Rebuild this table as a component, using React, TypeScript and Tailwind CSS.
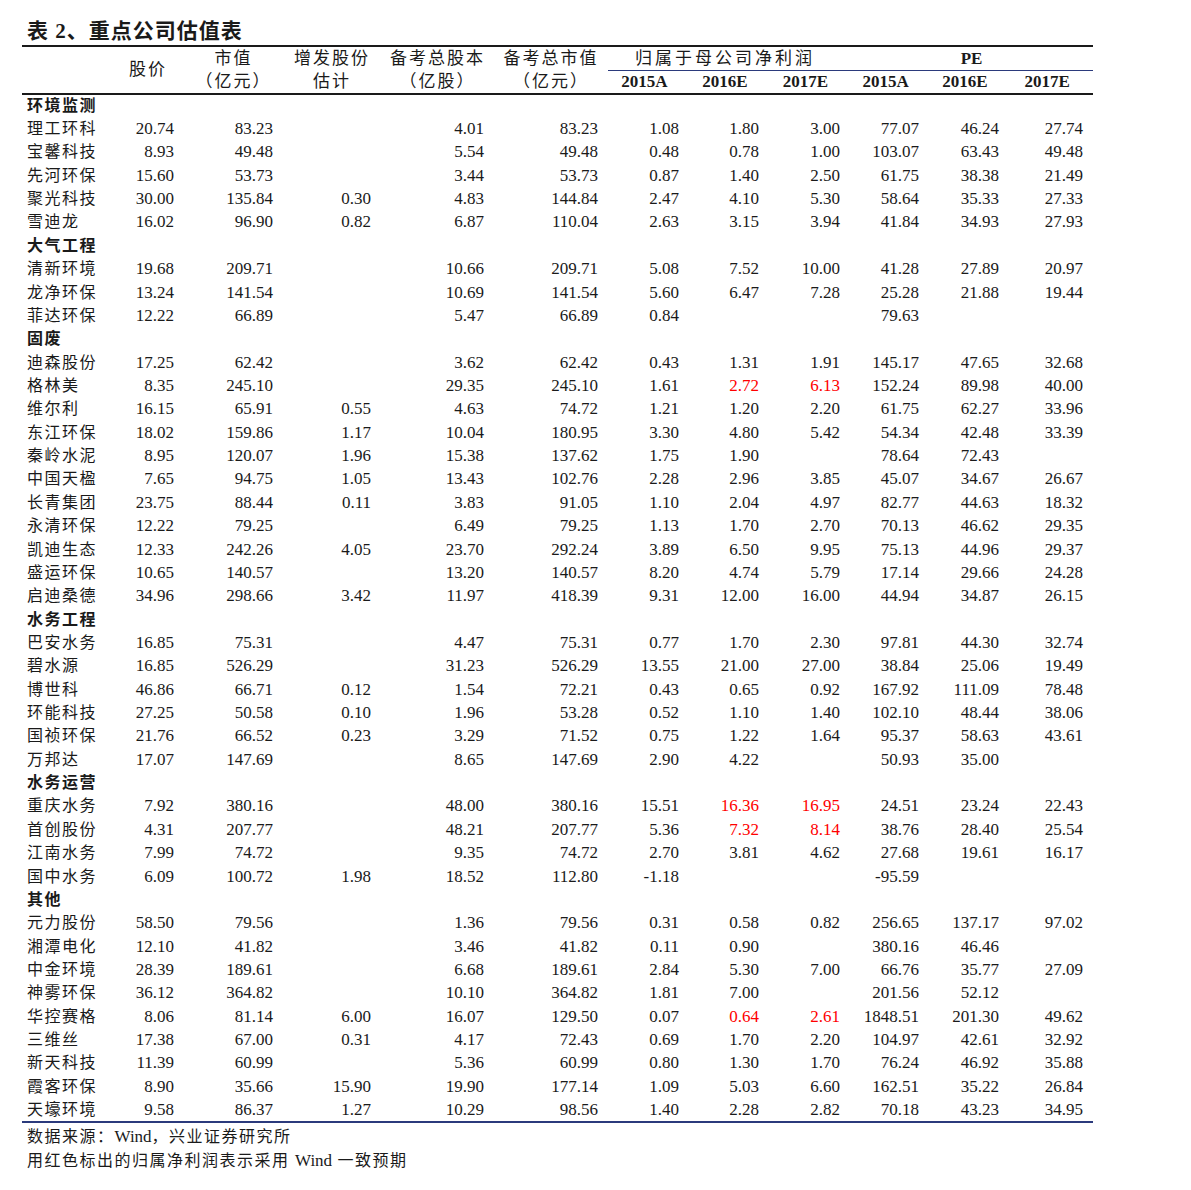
import React from "react";

// each row: name, then 11 values; "*" marks a figure printed in red (Wind consensus)
type Group = { title: string; rows: string[][] };

const groups: Group[] = [
 {
  title: "环境监测",
  rows: [
   ["理工环科", "20.74", "83.23", "", "4.01", "83.23", "1.08", "1.80", "3.00", "77.07", "46.24", "27.74"],
   ["宝馨科技", "8.93", "49.48", "", "5.54", "49.48", "0.48", "0.78", "1.00", "103.07", "63.43", "49.48"],
   ["先河环保", "15.60", "53.73", "", "3.44", "53.73", "0.87", "1.40", "2.50", "61.75", "38.38", "21.49"],
   ["聚光科技", "30.00", "135.84", "0.30", "4.83", "144.84", "2.47", "4.10", "5.30", "58.64", "35.33", "27.33"],
   ["雪迪龙", "16.02", "96.90", "0.82", "6.87", "110.04", "2.63", "3.15", "3.94", "41.84", "34.93", "27.93"],
  ],
 },
 {
  title: "大气工程",
  rows: [
   ["清新环境", "19.68", "209.71", "", "10.66", "209.71", "5.08", "7.52", "10.00", "41.28", "27.89", "20.97"],
   ["龙净环保", "13.24", "141.54", "", "10.69", "141.54", "5.60", "6.47", "7.28", "25.28", "21.88", "19.44"],
   ["菲达环保", "12.22", "66.89", "", "5.47", "66.89", "0.84", "", "", "79.63", "", ""],
  ],
 },
 {
  title: "固废",
  rows: [
   ["迪森股份", "17.25", "62.42", "", "3.62", "62.42", "0.43", "1.31", "1.91", "145.17", "47.65", "32.68"],
   ["格林美", "8.35", "245.10", "", "29.35", "245.10", "1.61", "*2.72", "*6.13", "152.24", "89.98", "40.00"],
   ["维尔利", "16.15", "65.91", "0.55", "4.63", "74.72", "1.21", "1.20", "2.20", "61.75", "62.27", "33.96"],
   ["东江环保", "18.02", "159.86", "1.17", "10.04", "180.95", "3.30", "4.80", "5.42", "54.34", "42.48", "33.39"],
   ["秦岭水泥", "8.95", "120.07", "1.96", "15.38", "137.62", "1.75", "1.90", "", "78.64", "72.43", ""],
   ["中国天楹", "7.65", "94.75", "1.05", "13.43", "102.76", "2.28", "2.96", "3.85", "45.07", "34.67", "26.67"],
   ["长青集团", "23.75", "88.44", "0.11", "3.83", "91.05", "1.10", "2.04", "4.97", "82.77", "44.63", "18.32"],
   ["永清环保", "12.22", "79.25", "", "6.49", "79.25", "1.13", "1.70", "2.70", "70.13", "46.62", "29.35"],
   ["凯迪生态", "12.33", "242.26", "4.05", "23.70", "292.24", "3.89", "6.50", "9.95", "75.13", "44.96", "29.37"],
   ["盛运环保", "10.65", "140.57", "", "13.20", "140.57", "8.20", "4.74", "5.79", "17.14", "29.66", "24.28"],
   ["启迪桑德", "34.96", "298.66", "3.42", "11.97", "418.39", "9.31", "12.00", "16.00", "44.94", "34.87", "26.15"],
  ],
 },
 {
  title: "水务工程",
  rows: [
   ["巴安水务", "16.85", "75.31", "", "4.47", "75.31", "0.77", "1.70", "2.30", "97.81", "44.30", "32.74"],
   ["碧水源", "16.85", "526.29", "", "31.23", "526.29", "13.55", "21.00", "27.00", "38.84", "25.06", "19.49"],
   ["博世科", "46.86", "66.71", "0.12", "1.54", "72.21", "0.43", "0.65", "0.92", "167.92", "111.09", "78.48"],
   ["环能科技", "27.25", "50.58", "0.10", "1.96", "53.28", "0.52", "1.10", "1.40", "102.10", "48.44", "38.06"],
   ["国祯环保", "21.76", "66.52", "0.23", "3.29", "71.52", "0.75", "1.22", "1.64", "95.37", "58.63", "43.61"],
   ["万邦达", "17.07", "147.69", "", "8.65", "147.69", "2.90", "4.22", "", "50.93", "35.00", ""],
  ],
 },
 {
  title: "水务运营",
  rows: [
   ["重庆水务", "7.92", "380.16", "", "48.00", "380.16", "15.51", "*16.36", "*16.95", "24.51", "23.24", "22.43"],
   ["首创股份", "4.31", "207.77", "", "48.21", "207.77", "5.36", "*7.32", "*8.14", "38.76", "28.40", "25.54"],
   ["江南水务", "7.99", "74.72", "", "9.35", "74.72", "2.70", "3.81", "4.62", "27.68", "19.61", "16.17"],
   ["国中水务", "6.09", "100.72", "1.98", "18.52", "112.80", "-1.18", "", "", "-95.59", "", ""],
  ],
 },
 {
  title: "其他",
  rows: [
   ["元力股份", "58.50", "79.56", "", "1.36", "79.56", "0.31", "0.58", "0.82", "256.65", "137.17", "97.02"],
   ["湘潭电化", "12.10", "41.82", "", "3.46", "41.82", "0.11", "0.90", "", "380.16", "46.46", ""],
   ["中金环境", "28.39", "189.61", "", "6.68", "189.61", "2.84", "5.30", "7.00", "66.76", "35.77", "27.09"],
   ["神雾环保", "36.12", "364.82", "", "10.10", "364.82", "1.81", "7.00", "", "201.56", "52.12", ""],
   ["华控赛格", "8.06", "81.14", "6.00", "16.07", "129.50", "0.07", "*0.64", "*2.61", "1848.51", "201.30", "49.62"],
   ["三维丝", "17.38", "67.00", "0.31", "4.17", "72.43", "0.69", "1.70", "2.20", "104.97", "42.61", "32.92"],
   ["新天科技", "11.39", "60.99", "", "5.36", "60.99", "0.80", "1.30", "1.70", "76.24", "46.92", "35.88"],
   ["霞客环保", "8.90", "35.66", "15.90", "19.90", "177.14", "1.09", "5.03", "6.60", "162.51", "35.22", "26.84"],
   ["天壕环境", "9.58", "86.37", "1.27", "10.29", "98.56", "1.40", "2.28", "2.82", "70.18", "43.23", "34.95"],
  ],
 },
];

const years = ["2015A", "2016E", "2017E"];

const App = () => {
 const lastGroup = groups.length - 1;
 return (
  <div className="w-[1191px] min-h-[1190px] bg-white pl-[22px] text-[#1a1a1a] font-['Liberation_Serif','Noto_Sans_CJK_SC',serif]">
   {/* --- Title --- */}
   <div className="h-[45px] pt-[18px] pl-[5px] text-[21px] leading-[26px] font-bold tracking-[1px]">
    表 2、重点公司估值表
   </div>

   <table className="w-[1071px] table-fixed border-collapse">
    <colgroup>
     <col className="w-[90px]" />
     <col className="w-[72px]" />
     <col className="w-[99px]" />
     <col className="w-[98px]" />
     <col className="w-[113px]" />
     <col className="w-[114px]" />
     <col className="w-[81px]" />
     <col className="w-[80px]" />
     <col className="w-[81px]" />
     <col className="w-[79px]" />
     <col className="w-[80px]" />
     <col className="w-[84px]" />
    </colgroup>

    {/* --- Header --- */}
    <thead className="text-[17px] leading-[20px]">
     <tr className="h-[24px] border-t-2 border-[#1a1a1a]">
      <th rowSpan={2} className="border-b-2 border-[#1a1a1a]" />
      <th rowSpan={2} className="border-b-2 border-[#1a1a1a] font-normal tracking-[2px]">
       股价
      </th>
      <th rowSpan={2} className="border-b-2 border-[#1a1a1a] font-normal tracking-[2px] leading-[23px]">
       市值
       <br />
       （亿元）
      </th>
      <th rowSpan={2} className="border-b-2 border-[#1a1a1a] font-normal tracking-[2px] leading-[23px]">
       增发股份
       <br />
       估计
      </th>
      <th rowSpan={2} className="border-b-2 border-[#1a1a1a] font-normal tracking-[2px] leading-[23px]">
       备考总股本
       <br />
       （亿股）
      </th>
      <th rowSpan={2} className="border-b-2 border-[#1a1a1a] font-normal tracking-[2px] leading-[23px]">
       备考总市值
       <br />
       （亿元）
      </th>
      <th colSpan={3} className="border-b-[1.5px] border-[#2b3a7c] font-normal tracking-[3px] pr-[8px]">
       归属于母公司净利润
      </th>
      <th colSpan={3} className="border-b-[1.5px] border-[#2b3a7c] font-bold">
       PE
      </th>
     </tr>
     <tr className="h-[23px]">
      {[...years, ...years].map((y, i) => (
       <th key={i} className="border-b-2 border-[#1a1a1a] font-bold pr-[8px]">
        {y}
       </th>
      ))}
     </tr>
    </thead>

    {/* --- Body --- */}
    <tbody className="text-[17px]">
     {groups.map((g, gi) => (
      <React.Fragment key={g.title}>
       <tr className="h-[23.37px]">
        <td colSpan={12} className="pl-[5px] font-bold tracking-[1.5px] leading-[20px] text-[16px]">
         {g.title}
        </td>
       </tr>
       {g.rows.map((r, ri) => {
        const isLast = gi === lastGroup && ri === g.rows.length - 1;
        return (
         <tr
          key={r[0]}
          className={isLast ? "h-[23.37px] border-b-2 border-[#2b3a7c]" : "h-[23.37px]"}>
          <td className="pl-[5px] text-[16px] tracking-[1.5px] leading-[20px] whitespace-nowrap">
           {r[0]}
          </td>
          {r.slice(1).map((v, i) => {
           const red = v.startsWith("*");
           return (
            <td
             key={i}
             className={
              red
               ? "pr-[10px] text-right leading-[20px] text-[#ff0000]"
               : "pr-[10px] text-right leading-[20px]"
             }>
             {red ? v.slice(1) : v}
            </td>
           );
          })}
         </tr>
        );
       })}
      </React.Fragment>
     ))}
    </tbody>
   </table>

   {/* --- Notes --- */}
   <div className="pl-[5px] pt-[2px] text-[16px] leading-[24px] tracking-[1.5px]">
    <p>
     数据来源：<span className="tracking-normal text-[17px]">Wind</span>，兴业证券研究所
    </p>
    <p>
     用红色标出的归属净利润表示采用 <span className="tracking-normal text-[17px]">Wind</span> 一致预期
    </p>
   </div>
  </div>
 );
};

export default App;
